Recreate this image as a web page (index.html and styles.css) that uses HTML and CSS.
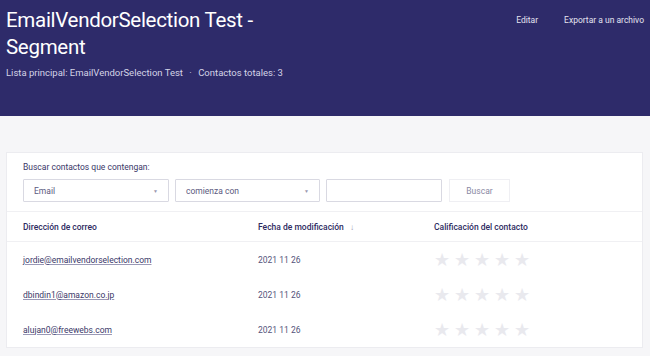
FILE: index.html
```html
<!DOCTYPE html>
<html lang="es">
<head>
<meta charset="utf-8">
<title>EmailVendorSelection Test - Segment</title>
<link rel="stylesheet" href="styles.css">
</head>
<body>
<header class="hero">
  <div class="hero-main">
    <h1 class="title">EmailVendorSelection Test -<br>Segment</h1>
    <p class="meta">Lista principal: EmailVendorSelection Test <span class="dot">·</span> Contactos totales: 3</p>
  </div>
  <nav class="actions">
    <a class="action">Editar</a>
    <a class="action">Exportar a un archivo</a>
  </nav>
</header>
<main class="page">
  <section class="card">
    <div class="search">
      <label class="search-label">Buscar contactos que contengan:</label>
      <div class="search-row">
        <div class="select sel-field"><span>Email</span><span class="caret">▼</span></div>
        <div class="select sel-op"><span>comienza con</span><span class="caret">▼</span></div>
        <div class="input"></div>
        <button class="btn">Buscar</button>
      </div>
    </div>
    <div class="table">
      <div class="row head">
        <div class="c1">Dirección de correo</div>
        <div class="c2">Fecha de modificación <span class="arrow">↓</span></div>
        <div class="c3">Calificación del contacto</div>
      </div>
      <div class="row">
        <div class="c1"><a class="mail">jordie@emailvendorselection.com</a></div>
        <div class="c2 date">2021 11 26</div>
        <div class="c3 stars"><span>★</span><span>★</span><span>★</span><span>★</span><span>★</span></div>
      </div>
      <div class="row">
        <div class="c1"><a class="mail">dbindin1@amazon.co.jp</a></div>
        <div class="c2 date">2021 11 26</div>
        <div class="c3 stars"><span>★</span><span>★</span><span>★</span><span>★</span><span>★</span></div>
      </div>
      <div class="row">
        <div class="c1"><a class="mail">alujan0@freewebs.com</a></div>
        <div class="c2 date">2021 11 26</div>
        <div class="c3 stars"><span>★</span><span>★</span><span>★</span><span>★</span><span>★</span></div>
      </div>
    </div>
  </section>
</main>
</body>
</html>
```
FILE: styles.css
```css
* { box-sizing: border-box; }
html, body { margin: 0; padding: 0; }
body {
  width: 650px;
  height: 356px;
  overflow: hidden;
  background: #f6f6f8;
  font-family: Roboto, "Liberation Sans", sans-serif;
  color: #2e2b5f;
}
.hero {
  background: #2e2b6a;
  height: 116px;
  display: flex;
  justify-content: space-between;
  align-items: flex-start;
  padding: 0 6px 0 6px;
  color: #fff;
}
.title {
  margin: 7px 0 0 0;
  font-size: 20.5px;
  font-weight: 400;
  line-height: 27px;
  letter-spacing: -0.3px;
}
.meta {
  margin: 6px 0 0 0;
  font-size: 9.5px;
  color: #d4d3e6;
}
.dot { margin: 0 4px; }
.actions {
  display: flex;
  gap: 26px;
  padding-top: 15px;
}
.action {
  font-size: 8.5px;
  color: #e4e3f0;
}
.page {
  padding: 36px 7px 0 6px;
}
.card {
  background: #fff;
  border: 1px solid #ececf0;
}
.search {
  padding: 9px 16px 9px 16px;
  border-bottom: 1px solid #f0f0f3;
}
.search-label {
  display: block;
  font-size: 8.5px;
  color: #3a3768;
  margin-bottom: 7px;
}
.search-row {
  display: flex;
  gap: 6px;
  align-items: center;
}
.select, .input {
  height: 23px;
  border: 1px solid #d9d9e2;
  border-radius: 1px;
  background: #fff;
}
.select {
  display: flex;
  justify-content: space-between;
  align-items: center;
  padding: 0 10px;
  font-size: 8.5px;
  color: #5b5980;
}
.sel-field { width: 146px; }
.sel-op { width: 145px; }
.caret { font-size: 5px; color: #9a99b0; }
.input { width: 116px; }
.btn {
  margin-left: 1px;
  width: 61px;
  height: 23px;
  border: 1px solid #efeff3;
  background: #fff;
  font-family: inherit;
  font-size: 8.5px;
  color: #8a89a3;
  padding: 0;
}
.row {
  display: flex;
  align-items: center;
  height: 35px;
  padding: 0 16px;
  font-size: 8.5px;
}
.row.head {
  height: 30px;
  border-bottom: 1px solid #f0f0f3;
  font-weight: 500;
  color: #2e2b5f;
}
.c1 { width: 235px; }
.c2 { width: 176px; }
.c3 { flex: 1; }
.arrow { font-weight: 400; color: #9a99b0; margin-left: 4px; font-size: 8px; }
.mail { color: #3a3768; text-decoration: underline; text-decoration-color: #9a99b6; }
.date { color: #55537a; }
.stars { display: flex; gap: 4px; }
.stars span { font-size: 18px; line-height: 1; color: #e9e9ee; width: 16px; text-align: center; }
```
